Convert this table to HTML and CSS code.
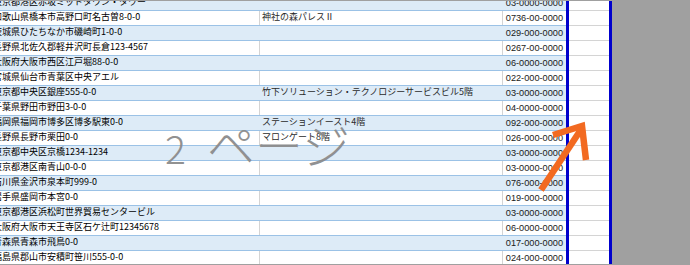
FILE: index.html
```html
<!DOCTYPE html>
<html lang="ja">
<head>
<meta charset="utf-8">
<title>改ページプレビュー</title>
<link rel="stylesheet" href="styles.css">
</head>
<body>
<div class="frame">
  <div class="sheet">
    <div class="row band"><div class="ca"><span>東京都港区赤坂ミッドタウン・タワー</span></div><div class="cb"></div><div class="cc">03-0000-0000</div></div>
    <div class="row"><div class="ca"><span>和歌山県橋本市高野口町名古曽8-0-0</span></div><div class="cb">神社の森パレスⅡ</div><div class="cc">0736-00-0000</div></div>
    <div class="row band"><div class="ca"><span>茨城県ひたちなか市磯崎町1-0-0</span></div><div class="cb"></div><div class="cc">029-000-0000</div></div>
    <div class="row"><div class="ca"><span>長野県北佐久郡軽井沢町長倉123-4567</span></div><div class="cb"></div><div class="cc">0267-00-0000</div></div>
    <div class="row band"><div class="ca"><span>大阪府大阪市西区江戸堀88-0-0</span></div><div class="cb"></div><div class="cc">06-0000-0000</div></div>
    <div class="row"><div class="ca"><span>宮城県仙台市青葉区中央アエル</span></div><div class="cb"></div><div class="cc">022-000-0000</div></div>
    <div class="row band"><div class="ca"><span>東京都中央区銀座555-0-0</span></div><div class="cb">竹下ソリューション・テクノロジーサービスビル5階</div><div class="cc">03-0000-0000</div></div>
    <div class="row"><div class="ca"><span>千葉県野田市野田3-0-0</span></div><div class="cb"></div><div class="cc">04-0000-0000</div></div>
    <div class="row band"><div class="ca"><span>福岡県福岡市博多区博多駅東0-0</span></div><div class="cb">ステーションイースト4階</div><div class="cc">092-000-0000</div></div>
    <div class="row"><div class="ca"><span>長野県長野市栗田0-0</span></div><div class="cb">マロンゲート8階</div><div class="cc">026-000-0000</div></div>
    <div class="row band"><div class="ca"><span>東京都中央区京橋1234-1234</span></div><div class="cb"></div><div class="cc">03-0000-0000</div></div>
    <div class="row"><div class="ca"><span>東京都港区南青山0-0-0</span></div><div class="cb"></div><div class="cc">03-0000-0000</div></div>
    <div class="row band"><div class="ca"><span>石川県金沢市泉本町999-0</span></div><div class="cb"></div><div class="cc">076-000-0000</div></div>
    <div class="row"><div class="ca"><span>岩手県盛岡市本宮0-0</span></div><div class="cb"></div><div class="cc">019-000-0000</div></div>
    <div class="row band"><div class="ca"><span>東京都港区浜松町世界貿易センタービル</span></div><div class="cb"></div><div class="cc">03-0000-0000</div></div>
    <div class="row"><div class="ca"><span>大阪府大阪市天王寺区石ケ辻町12345678</span></div><div class="cb"></div><div class="cc">06-0000-0000</div></div>
    <div class="row band"><div class="ca"><span>青森県青森市飛鳥0-0</span></div><div class="cb"></div><div class="cc">017-000-0000</div></div>
    <div class="row"><div class="ca"><span>福島県郡山市安積町笹川555-0-0</span></div><div class="cb"></div><div class="cc">024-000-0000</div></div>
  </div>
  <div class="pagebreak"></div>
  <div class="extra">
    <div class="xrow"></div><div class="xrow"></div><div class="xrow"></div><div class="xrow"></div><div class="xrow"></div><div class="xrow"></div>
    <div class="xrow"></div><div class="xrow"></div><div class="xrow"></div><div class="xrow"></div><div class="xrow"></div><div class="xrow"></div>
    <div class="xrow"></div><div class="xrow"></div><div class="xrow"></div><div class="xrow"></div><div class="xrow"></div><div class="xrow"></div>
  </div>
  <div class="pagebreak"></div>
  <div class="outside"></div>

  <div class="watermark"><span class="num">2</span><span class="kana">ページ</span></div>

  <svg class="arrow" width="690" height="265" viewBox="0 0 690 265" aria-hidden="true">
    <line x1="541" y1="190" x2="582" y2="128" stroke="#f26a21" stroke-width="6.5"/>
    <polyline points="553,135 582,126 586,160" fill="none" stroke="#f26a21" stroke-width="6.5" stroke-linejoin="miter" stroke-miterlimit="10"/>
  </svg>
</div>
</body>
</html>
```

FILE: styles.css
```css
html, body {
  margin: 0;
  padding: 0;
  background: #ffffff;
}

.frame {
  position: relative;
  width: 690px;
  height: 265px;
  box-sizing: border-box;
  border-top: 1px solid #a0a0a0;
  border-bottom: 1px solid #a0a0a0;
  overflow: hidden;
  display: flex;
  background: #ffffff;
}

.sheet {
  width: 566px;
  flex: none;
  margin-top: -5px;
}

.row {
  display: flex;
  height: 14px;
  border-bottom: 1px solid #9bc2e6;
  background: #ffffff;
}

.row.band {
  background: #ddebf7;
}

.ca, .cb, .cc {
  box-sizing: border-box;
  height: 14px;
  overflow: hidden;
  white-space: nowrap;
  color: #000000;
}

.ca, .cb {
  font-family: "Noto Sans CJK JP", "Noto Sans", sans-serif;
  font-size: 9px;
  line-height: 10px;
  padding-top: 1px;
}

.ca {
  width: 260px;
  border-right: 1px solid #d4d4d4;
}

.ca span {
  display: block;
  margin-left: -7px;
}

.cb {
  width: 243px;
  padding-left: 2px;
  border-right: 1px solid #d4d4d4;
  color: #2a2a2a;
  overflow: visible;
}

.band .ca, .band .cb {
  border-right-color: transparent;
}

.cc {
  width: 63px;
  text-align: right;
  padding-right: 3px;
  font-family: "Liberation Sans", Arial, sans-serif;
  font-size: 9.2px;
  line-height: 14px;
  color: #1a1a1a;
}

.pagebreak {
  width: 3px;
  flex: none;
  background: #0000cc;
}

.extra {
  width: 40px;
  flex: none;
  margin-top: -5px;
  background: #ffffff;
}

.xrow {
  height: 14px;
  border-bottom: 1px solid #d4d4d4;
}

.outside {
  flex: 1;
  background: #a0a0a0;
}

.watermark {
  position: absolute;
  left: 165px;
  top: 117px;
  white-space: nowrap;
  color: #8c8c8c;
  font-family: "Noto Sans CJK JP", sans-serif;
  font-weight: 300;
  line-height: 50px;
  opacity: 0.95;
}

.watermark .num {
  font-size: 39px;
  margin-right: 21px;
}

.watermark .kana {
  font-size: 48px;
}

.arrow {
  position: absolute;
  left: 0;
  top: -1px;
}
```
